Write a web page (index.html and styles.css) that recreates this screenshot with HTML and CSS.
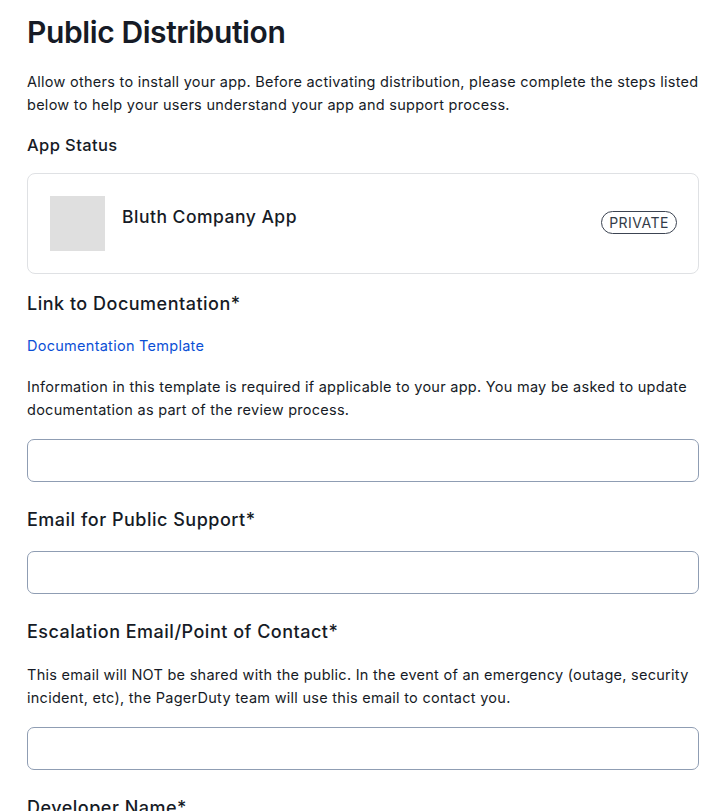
FILE: index.html
```html
<!DOCTYPE html>
<html lang="en">
<head>
<meta charset="utf-8">
<title>Public Distribution</title>
<link rel="stylesheet" href="styles.css">
</head>
<body>
<main class="page">
  <h1 class="title">Public Distribution</h1>
  <p class="text">Allow others to install your app. Before activating distribution, please complete the steps listed below to help your users understand your app and support process.</p>

  <section class="block">
    <h2 class="subhead">App Status</h2>
    <div class="card">
      <div class="app-icon"></div>
      <div class="app-name">Bluth Company App</div>
      <span class="badge">PRIVATE</span>
    </div>
  </section>

  <section class="field">
    <h2 class="label">Link to Documentation*</h2>
    <a class="link" href="#">Documentation Template</a>
    <p class="text">Information in this template is required if applicable to your app. You may be asked to update documentation as part of the review process.</p>
    <input class="input" type="text">
  </section>

  <section class="field">
    <h2 class="label">Email for Public Support*</h2>
    <input class="input" type="text">
  </section>

  <section class="field">
    <h2 class="label">Escalation Email/Point of Contact*</h2>
    <p class="text">This email will NOT be shared with the public. In the event of an emergency (outage, security incident, etc), the PagerDuty team will use this email to contact you.</p>
    <input class="input" type="text">
  </section>

  <section class="field">
    <h2 class="label">Developer Name*</h2>
    <input class="input" type="text">
  </section>
</main>
</body>
</html>
```

FILE: styles.css
```css
html, body {
  margin: 0;
  padding: 0;
  background: #ffffff;
}

body {
  font-family: Inter, "Noto Sans", "Liberation Sans", sans-serif;
  color: #161b26;
  overflow: hidden;
}

.page {
  padding: 14px 18px 0 27px;
  display: flex;
  flex-direction: column;
  gap: 21px;
}

.title {
  margin: 0;
  font-size: 30px;
  line-height: 36px;
  font-weight: 600;
  letter-spacing: -0.4px;
}

.text {
  margin: 0;
  font-size: 14.5px;
  line-height: 23px;
  letter-spacing: 0.27px;
  color: #161b26;
}

.page > .text {
  line-height: 22.5px;
}

.block {
  display: flex;
  flex-direction: column;
  gap: 16px;
  margin-top: -4px;
}

.subhead {
  margin: 0;
  font-size: 16.5px;
  line-height: 24px;
  font-weight: 500;
  letter-spacing: 0.4px;
}

.card {
  display: flex;
  align-items: flex-start;
  height: 101px;
  box-sizing: border-box;
  border: 1px solid #dfe1e4;
  border-radius: 8px;
  padding: 22px 21px 0 22px;
}

.app-icon {
  width: 55px;
  height: 55px;
  background: #dfdfdf;
  flex: none;
}

.app-name {
  margin-left: 17px;
  font-size: 17.5px;
  line-height: 26px;
  font-weight: 500;
  letter-spacing: 0.5px;
  margin-top: 8px;
  flex: 1;
}

.badge {
  margin-top: 15px;
  border: 1px solid #3c4452;
  border-radius: 12px;
  padding: 0 7px;
  font-size: 14px;
  line-height: 21px;
  color: #333b48;
  letter-spacing: 0.5px;
}

.field {
  display: flex;
  flex-direction: column;
  gap: 18px;
  margin-top: -4px;
}

.field + .field {
  margin-top: 4px;
}

.label {
  margin: 0;
  font-size: 18px;
  line-height: 26px;
  font-weight: 500;
  letter-spacing: 0.5px;
}

.link {
  font-size: 14.5px;
  line-height: 22px;
  letter-spacing: 0.27px;
  color: #0b4fd6;
  text-decoration: none;
  align-self: flex-start;
}

.input {
  display: block;
  margin: 0;
  height: 43px;
  box-sizing: border-box;
  border: 1px solid #8f9db3;
  border-radius: 7px;
  background: #fff;
  padding: 0 12px;
  font: inherit;
}
```
